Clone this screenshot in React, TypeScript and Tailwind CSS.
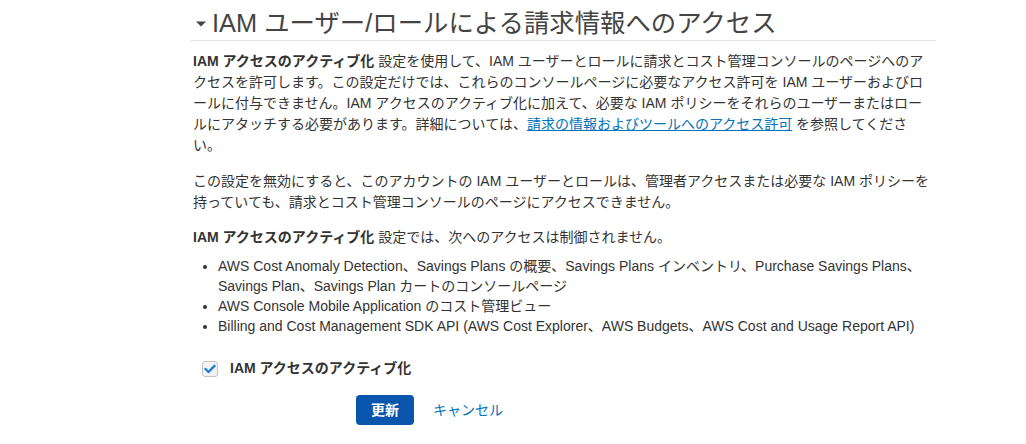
export default function App() {
  const font = { fontFamily: '"Liberation Sans", Arial, "Noto Sans CJK JP", sans-serif' }
  return (
    <div className="min-h-[444px] w-[1026px] bg-white text-[#333333]" style={font}>
      <div className="ml-[190px] w-[746px] pt-[7px]">
        {/* Section heading */}
        <div className="flex items-center border-b border-[#e1e4e8] pb-[1px]">
          <svg width="12" height="8" viewBox="0 0 12 8" className="ml-[5px] mr-[5px] mt-[2px] shrink-0">
            <path d="M1 1.5 L11 1.5 L6 6.5 Z" fill="#444444" />
          </svg>
          <h2 className="text-[25.4px] leading-[32px] font-normal text-[#444444]">
            IAM ユーザー/ロールによる請求情報へのアクセス
          </h2>
        </div>

        <div className="pl-[3px] pt-[10px] text-[14px] leading-[21px]">
          <p>
            <b>IAM アクセスのアクティブ化</b> 設定を使用して、IAM ユーザーとロールに請求とコスト管理コンソールのページへのアクセスを許可します。この設定だけでは、これらのコンソールページに必要なアクセス許可を IAM ユーザーおよびロールに付与できません。IAM アクセスのアクティブ化に加えて、必要な IAM ポリシーをそれらのユーザーまたはロールにアタッチする必要があります。詳細については、
            <a href="#" className="text-[#0073bb] underline">請求の情報およびツールへのアクセス許可</a> を参照してくださ
            <br />
            い。
          </p>
          <p className="mt-[15px]">
            この設定を無効にすると、このアカウントの IAM ユーザーとロールは、管理者アクセスまたは必要な IAM ポリシーを持っていても、請求とコスト管理コンソールのページにアクセスできません。
          </p>
          <p className="mt-[14px]">
            <b>IAM アクセスのアクティブ化</b> 設定では、次へのアクセスは制御されません。
          </p>
          <ul className="mt-[8px] list-disc pl-[25px] leading-[20px]">
            <li>
              AWS Cost Anomaly Detection、Savings Plans の概要、Savings Plans インベントリ、Purchase Savings Plans、Savings Plan、Savings Plan カートのコンソールページ
            </li>
            <li>AWS Console Mobile Application のコスト管理ビュー</li>
            <li>
              Billing and Cost Management SDK API (AWS Cost Explorer、AWS Budgets、AWS Cost and Usage Report API)
            </li>
          </ul>

          <label className="mt-[22px] ml-[9px] flex items-center gap-[12px]">
            <span className="flex h-[16px] w-[16px] items-center justify-center rounded-[3px] border border-[#c4c4c4] bg-[#f3f3f3]">
              <svg width="12" height="10" viewBox="0 0 12 10">
                <path d="M1.5 5 L4.5 8 L10.5 1.8" fill="none" stroke="#1a7fd6" strokeWidth="2.4" strokeLinecap="round" strokeLinejoin="round" />
              </svg>
            </span>
            <span className="font-bold text-[14px]">IAM アクセスのアクティブ化</span>
          </label>

          <div className="mt-[16px] ml-[163px] flex items-center gap-[19px]">
            <button className="h-[30px] w-[58px] rounded-[4px] bg-[#0a56ac] text-[14px] font-bold text-white">
              更新
            </button>
            <a href="#" className="text-[14px] text-[#0073bb]">キャンセル</a>
          </div>
        </div>
      </div>
    </div>
  )
}
